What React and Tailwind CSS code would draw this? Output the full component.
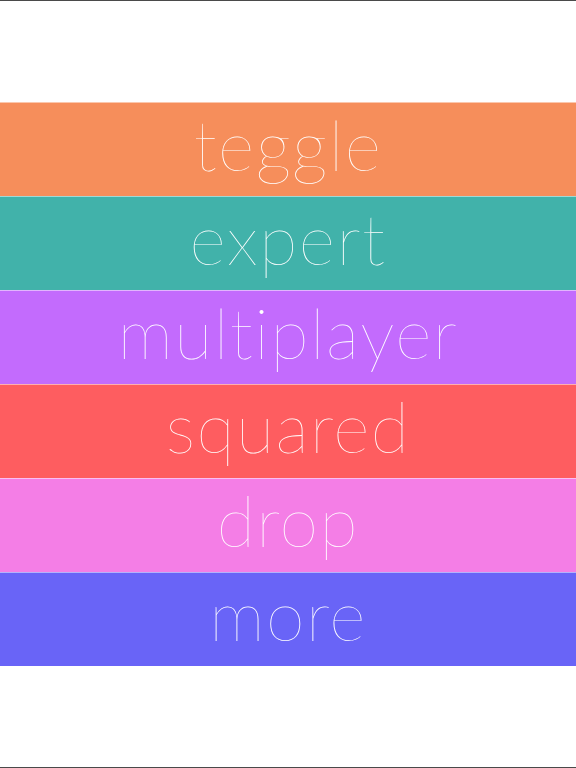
const ITEMS = [
  { label: "teggle", bg: "bg-[#f68e5b]" },
  { label: "expert", bg: "bg-[#41b2aa]" },
  { label: "multiplayer", bg: "bg-[#c36bfd]" },
  { label: "squared", bg: "bg-[#fe5d60]" },
  { label: "drop", bg: "bg-[#f47ee6]" },
  { label: "more", bg: "bg-[#6964f7]" },
];

export default function App() {
  return (
    <div className="w-[576px] h-[768px] bg-white flex flex-col border-t border-b border-[#4a4a4a] overflow-hidden">
      <div className="h-[101px] shrink-0" />
      {ITEMS.map((item) => (
        <div
          key={item.label}
          className={`${item.bg} h-[94px] shrink-0 border-t border-white/50 flex items-center justify-center`}
        >
          <span
            className="text-white text-[70px] leading-none font-thin tracking-[1.5px] pb-[12px] [font-variant-ligatures:none]"
            style={{ fontFamily: "Lato, 'Liberation Sans', sans-serif" }}
          >
            {item.label}
          </span>
        </div>
      ))}
    </div>
  );
}
